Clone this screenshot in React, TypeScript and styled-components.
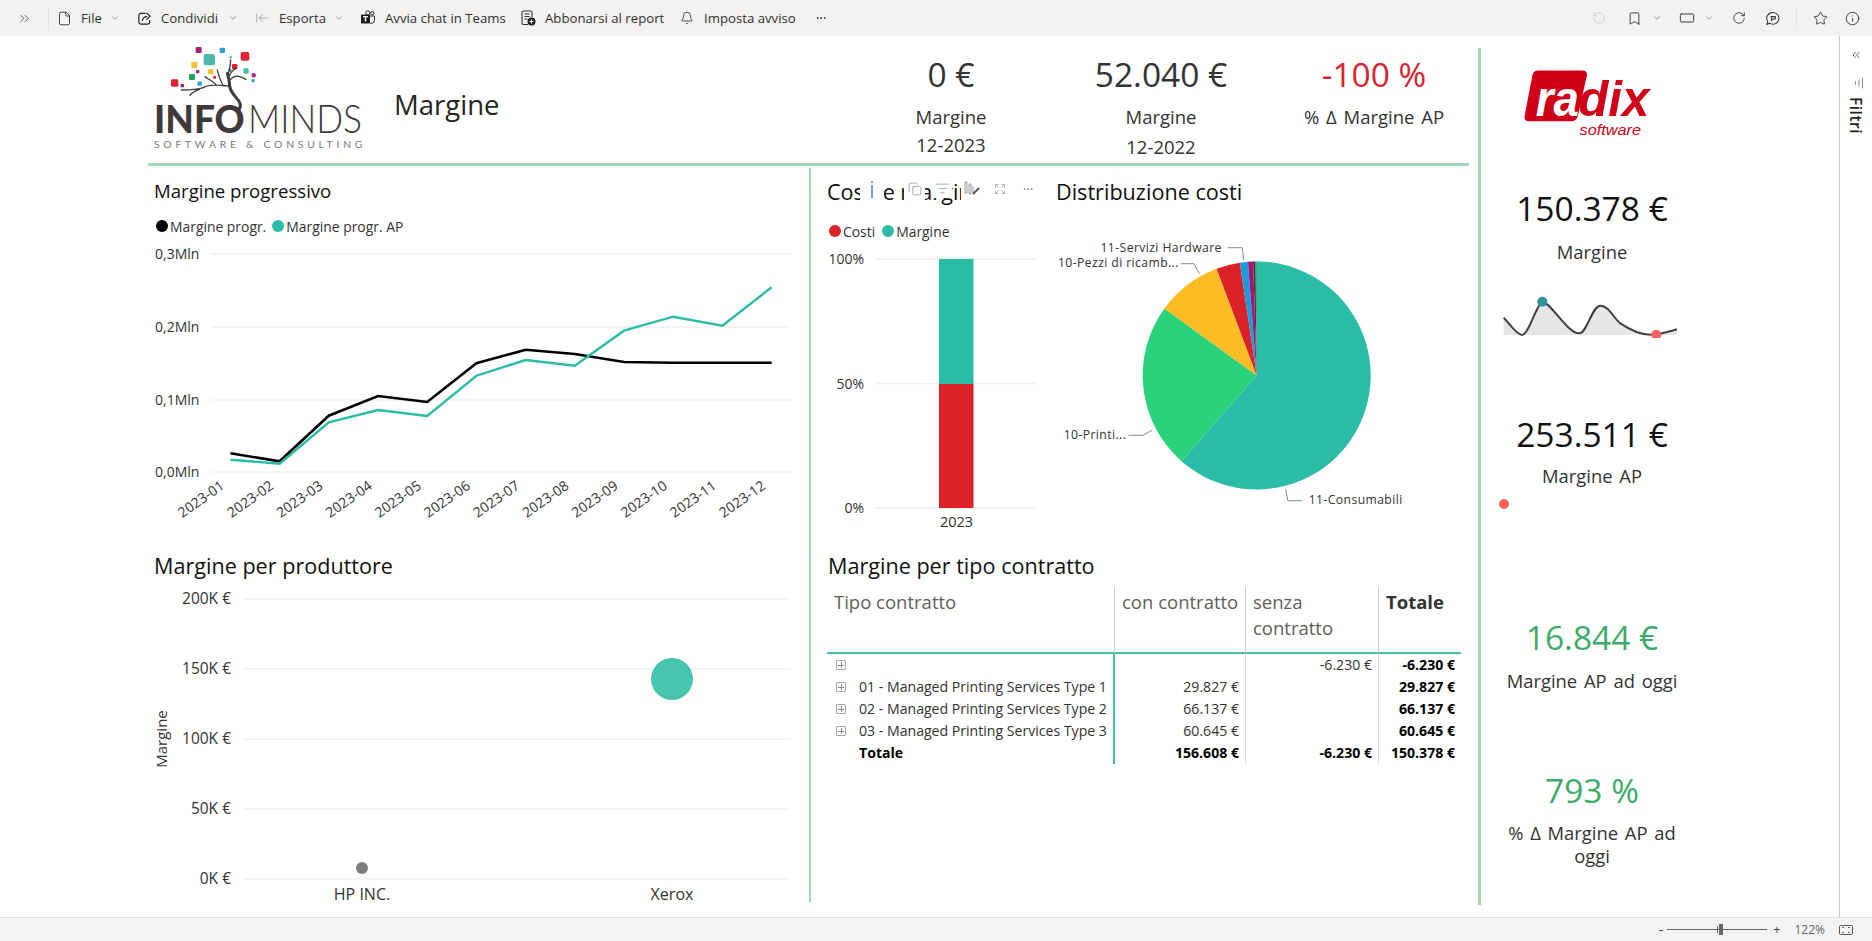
import styled, { createGlobalStyle } from 'styled-components'
import {
  ArrowLeftToLine,
  Bell,
  Bookmark,
  ChevronDown,
  ChevronsLeft,
  ChevronsRight,
  Copy,
  Expand,
  File,
  Info,
  ListFilter,
  MoreHorizontal,
  RectangleHorizontal,
  RotateCcw,
  RotateCw,
  Star,
} from 'lucide-react'

const TEAL = '#2abca6'
const RED = '#dc2229'
const GREEN_LINE = '#a4d9b8'
const FONT = `"Open Sans", "Noto Sans", sans-serif`

const GlobalStyle = createGlobalStyle`
  html, body {
    margin: 0;
    padding: 0;
    height: 100%;
    overflow: hidden;
    background: #fff;
    font-family: ${FONT};
    color: #252423;
  }
  * { box-sizing: border-box; }
`

const Page = styled.div`
  width: 1872px;
  height: 941px;
  display: flex;
  flex-direction: column;
`

const Toolbar = styled.div`
  height: 36px;
  flex-shrink: 0;
  display: flex;
  align-items: center;
  background: #f3f2f1;
  padding: 0 12px 0 16px;
`

const ToolIcon = styled.span<{ $ml?: number; $color?: string }>`
  width: 16px;
  height: 16px;
  flex-shrink: 0;
  display: flex;
  align-items: center;
  justify-content: center;
  margin-left: ${p => p.$ml ?? 0}px;
  color: ${p => p.$color ?? '#201f1e'};
`

const ToolLabel = styled.span<{ $w: number }>`
  width: ${p => p.$w}px;
  margin-left: 9px;
  font-size: 13.2px;
  line-height: 16px;
  white-space: nowrap;
  color: #323130;
`

const ToolChevron = styled.span<{ $ml?: number }>`
  width: 10px;
  flex-shrink: 0;
  display: flex;
  justify-content: center;
  margin-left: ${p => p.$ml ?? 9}px;
  color: #484644;
`

const ToolDivider = styled.span<{ $ml: number }>`
  width: 1px;
  height: 24px;
  flex-shrink: 0;
  margin-left: ${p => p.$ml}px;
  background: #e4e2e0;
`

const ToolSpacer = styled.span`
  flex: 1;
`

const Canvas = styled.div`
  flex: 1;
  min-height: 0;
  display: flex;
`

const Report = styled.div`
  width: 1839px;
  flex-shrink: 0;
  padding: 10px 0 0 148px;
  display: flex;
`

const MainColumn = styled.div`
  width: 1321px;
  flex-shrink: 0;
  display: flex;
  flex-direction: column;
`

const Header = styled.header`
  height: 120px;
  flex-shrink: 0;
  display: flex;
  border-bottom: 3px solid ${GREEN_LINE};
`

const ReportTitle = styled.h1`
  flex: 1;
  margin: 0;
  padding: 40px 0 0 14px;
  font-size: 27.5px;
  line-height: 38px;
  font-weight: 400;
  color: #252423;
`

const TopKpi = styled.div<{ $ml: number }>`
  width: 190px;
  flex-shrink: 0;
  margin-left: ${p => p.$ml}px;
  padding-top: 3px;
  text-align: center;
`

const TopValue = styled.div<{ $red?: boolean }>`
  font-size: 33.5px;
  line-height: 50px;
  color: ${p => (p.$red ? '#d9232e' : '#333')};
`

const TopLabel = styled.div<{ $mt: number }>`
  margin-top: ${p => p.$mt}px;
  font-size: 18.5px;
  line-height: 24px;
  word-spacing: 2px;
  color: #333;
`

const Body = styled.div`
  display: flex;
  margin-top: 2px;
`

const LeftPanel = styled.section`
  width: 663px;
  height: 734px;
  flex-shrink: 0;
  border-right: 2px solid ${GREEN_LINE};
`

const RightPanel = styled.section`
  flex: 1;
  min-width: 0;
`

const ChartTitle = styled.h2<{ $size?: number; $pl: number; $mt: number }>`
  margin: ${p => p.$mt}px 0 0 ${p => p.$pl}px;
  font-size: ${p => p.$size ?? 21.6}px;
  line-height: 24px;
  font-weight: 400;
  color: #111;
  white-space: nowrap;
`

const Legend = styled.div<{ $pl: number; $mt: number }>`
  margin: ${p => p.$mt}px 0 0 ${p => p.$pl}px;
  height: 20px;
  display: flex;
  align-items: center;
  font-size: 13.9px;
  color: #333;
`

const LegendDot = styled.span<{ $color: string; $ml?: number }>`
  width: 12px;
  height: 12px;
  border-radius: 50%;
  margin-left: ${p => p.$ml ?? 0}px;
  margin-right: 2px;
  background: ${p => p.$color};
`

const Chart = styled.svg<{ $mt?: number }>`
  display: block;
  margin-top: ${p => p.$mt ?? 0}px;
`

const GridLine = styled.line`
  stroke: #f0f0f0;
  stroke-width: 1.5;
`

const AxisText = styled.text<{ $size?: number }>`
  font-family: ${FONT};
  font-size: ${p => p.$size ?? 14}px;
  fill: #333;
`

const PieLabel = styled.text`
  font-family: ${FONT};
  font-size: 12.2px;
  letter-spacing: 0.4px;
  fill: #333;
`

const Leader = styled.polyline`
  fill: none;
  stroke: #8a8a8a;
  stroke-width: 1;
`

const TopRow = styled.div`
  display: flex;
  height: 362px;
`

const CostPanel = styled.div`
  width: 239px;
  flex-shrink: 0;
  position: relative;
`

const PiePanel = styled.div`
  flex: 1;
  min-width: 0;
`

const VisualHeader = styled.div`
  position: absolute;
  top: 10px;
  left: 49px;
  display: flex;
  align-items: flex-start;
`

const HeaderIcon = styled.span<{ $w: number; $ml?: number; $h?: number }>`
  width: ${p => p.$w}px;
  height: ${p => p.$h ?? 22}px;
  margin-left: ${p => p.$ml ?? 0}px;
  display: flex;
  align-items: center;
  justify-content: center;
  background: #fff;
  color: #8a8886;
`

const MatrixTable = styled.table`
  width: 634px;
  margin: 9px 0 0 16px;
  table-layout: fixed;
  border-collapse: separate;
  border-spacing: 0;
`

const HeadCell = styled.th<{ $bold?: boolean; $last?: boolean }>`
  height: 67px;
  padding: 2px 0 0 7px;
  vertical-align: top;
  text-align: left;
  font-size: 18.5px;
  line-height: 26px;
  white-space: nowrap;
  font-weight: ${p => (p.$bold ? 700 : 400)};
  color: ${p => (p.$bold ? '#333' : '#605e5c')};
  border-bottom: 2px solid #45bfa9;
  border-right: ${p => (p.$last ? 'none' : '1.5px solid #ccc')};
`

const RowCell = styled.td<{ $bold?: boolean; $first?: boolean; $last?: boolean }>`
  height: 22px;
  padding: 0 6px 0 0;
  text-align: ${p => (p.$first ? 'left' : 'right')};
  font-size: 14.1px;
  line-height: 22px;
  white-space: nowrap;
  font-weight: ${p => (p.$bold ? 700 : 400)};
  color: ${p => (p.$bold ? '#000' : '#333')};
  border-right: ${p =>
    p.$first ? '2px solid #45bfa9' : p.$last ? 'none' : '1.5px solid #ddd'};
`

const RowHead = styled.span`
  display: flex;
  align-items: center;
  padding-left: 9px;
`

const ExpandBox = styled.span<{ $hidden?: boolean }>`
  width: 10px;
  height: 10px;
  flex-shrink: 0;
  margin-right: 13px;
  position: relative;
  border: ${p => (p.$hidden ? 'none' : '1px solid #a8a8a8')};
  border-radius: 1px;

  &::before,
  &::after {
    content: ${p => (p.$hidden ? 'none' : '""')};
    position: absolute;
    background: #8a8a8a;
  }
  &::before {
    left: 1px;
    right: 1px;
    top: 3.5px;
    height: 1px;
  }
  &::after {
    top: 1px;
    bottom: 1px;
    left: 3.5px;
    width: 1px;
  }
`

const Side = styled.aside`
  margin: 2px 0 0 9px;
  height: 857px;
  width: 361px;
  flex-shrink: 0;
  border-left: 3px solid ${GREEN_LINE};
`

const SideStack = styled.div`
  width: 222px;
  display: flex;
  flex-direction: column;
  text-align: center;
`

const RadixLogo = styled.svg`
  display: block;
  margin: 20px 0 0 42px;
`

const SideValue = styled.div<{ $mt: number; $green?: boolean }>`
  margin-top: ${p => p.$mt}px;
  font-size: 33.5px;
  line-height: 48px;
  color: ${p => (p.$green ? '#3eab6a' : '#111')};
`

const SideLabel = styled.div<{ $mt?: number }>`
  margin-top: ${p => p.$mt ?? 8}px;
  font-size: 18.4px;
  line-height: 23px;
  word-spacing: 2px;
  color: #333;
`

const Spark = styled.svg`
  display: block;
  margin: 32px 0 0 21px;
`

const MissingPoint = styled.span`
  width: 10px;
  height: 10px;
  margin: 12px 0 0 18px;
  border-radius: 50%;
  background: #fd625e;
`

const FilterPane = styled.div`
  flex: 1;
  border-left: 1px solid #c8c8c8;
  display: flex;
  flex-direction: column;
  align-items: center;
  padding-top: 13px;
  color: #323130;
`

const FilterGlyph = styled.span`
  margin: 16px 0 0 5px;
  height: 12px;
  display: flex;
  transform: rotate(90deg);
`

const FilterLabel = styled.span`
  margin-top: 8px;
  writing-mode: vertical-rl;
  font-size: 15.5px;
  line-height: 16px;
  letter-spacing: 0.5px;
  font-weight: 600;
  color: #252423;
`

const StatusBar = styled.footer`
  height: 24px;
  flex-shrink: 0;
  display: flex;
  align-items: center;
  justify-content: flex-end;
  padding-right: 19px;
  background: #f3f3f3;
  border-top: 1px solid #e1e1e1;
  color: #605e5c;
  font-size: 12px;
`

const ZoomSign = styled.span<{ $mr?: number; $size?: number }>`
  margin-right: ${p => p.$mr ?? 0}px;
  font-size: ${p => p.$size ?? 12.5}px;
  color: #444;
  line-height: 16px;
`

const ZoomTrack = styled.span`
  width: 100px;
  height: 1px;
  margin-right: 6px;
  position: relative;
  background: #666;
`

const ZoomThumb = styled.span`
  position: absolute;
  left: 52px;
  top: -5px;
  width: 4px;
  height: 11px;
  background: #666;
`

const ZoomTick = styled.span`
  position: absolute;
  left: 50px;
  top: -3px;
  width: 1px;
  height: 7px;
  background: #666;
`

const ZoomValue = styled.span`
  margin: 0 14px 0 14px;
  color: #666;
`

const FitIcon = styled.svg`
  display: block;
`

const MONTHS = Array.from({ length: 12 }, (_, i) => `2023-${String(i + 1).padStart(2, '0')}`)
const LINE_X = MONTHS.map((_, i) => 230.4 + i * 49.2)
const BLACK_Y = [453.3, 461.3, 415.7, 396, 402, 363.3, 349.7, 354, 362, 362.7, 362.7, 362.7]
const TEAL_Y = [459.7, 463.7, 422.3, 410, 416, 375.7, 360, 365.7, 330.7, 316.7, 325.7, 287.3]

const toPoints = (ys: number[]) => ys.map((y, i) => `${LINE_X[i]},${y}`).join(' ')

function LineChart() {
  const ticks: [string, number][] = [
    ['0,3Mln', 254],
    ['0,2Mln', 327],
    ['0,1Mln', 400],
    ['0,0Mln', 472],
  ]
  return (
    <Chart $mt={4} width={661} height={290} viewBox="148 240 661 290">
      {ticks.map(([label, y]) => (
        <g key={label}>
          <GridLine x1={211.4} x2={790} y1={y} y2={y} />
          <AxisText x={155} y={y + 5}>
            {label}
          </AxisText>
        </g>
      ))}
      <polyline points={toPoints(BLACK_Y)} fill="none" stroke="#000" strokeWidth={2.6} />
      <polyline points={toPoints(TEAL_Y)} fill="none" stroke={TEAL} strokeWidth={2.4} />
      {MONTHS.map((m, i) => (
        <AxisText
          key={m}
          textAnchor="end"
          transform={`translate(${LINE_X[i] - 5} 488) rotate(-35)`}>
          {m}
        </AxisText>
      ))}
    </Chart>
  )
}

function BubbleChart() {
  const ticks: [string, number][] = [
    ['200K €', 599],
    ['150K €', 669],
    ['100K €', 739],
    ['50K €', 809],
    ['0K €', 879],
  ]
  return (
    <Chart $mt={7} width={661} height={322} viewBox="148 585 661 322">
      {ticks.map(([label, y]) => (
        <g key={label}>
          <GridLine x1={243.5} x2={790} y1={y} y2={y} />
          <AxisText $size={15.5} x={231} y={y + 5} textAnchor="end">
            {label}
          </AxisText>
        </g>
      ))}
      <AxisText $size={15} textAnchor="middle" transform="translate(167 739) rotate(-90)">
        Margine
      </AxisText>
      <circle cx={362} cy={868} r={6} fill="#7f7f7f" />
      <circle cx={672} cy={679} r={21} fill="#47c4ae" />
      <AxisText $size={16} x={362} y={900} textAnchor="middle">
        HP INC.
      </AxisText>
      <AxisText $size={16} x={672} y={900} textAnchor="middle">
        Xerox
      </AxisText>
    </Chart>
  )
}

function StackedBar() {
  const ticks: [string, number][] = [
    ['100%', 259],
    ['50%', 383.5],
    ['0%', 508],
  ]
  return (
    <Chart $mt={4} width={239} height={285} viewBox="811 245 239 285">
      {ticks.map(([label, y]) => (
        <g key={label}>
          <GridLine x1={876} x2={1035.5} y1={y} y2={y} />
          <AxisText x={864} y={y + 5} textAnchor="end">
            {label}
          </AxisText>
        </g>
      ))}
      <rect x={939} y={259} width={34.5} height={125} fill={TEAL} />
      <rect x={939} y={384} width={34.5} height={124} fill={RED} />
      <AxisText $size={14.5} x={956.5} y={527} textAnchor="middle">
        2023
      </AxisText>
    </Chart>
  )
}

const PIE_CX = 1256.7
const PIE_CY = 375.5
const PIE_SLICES: [number, number, string][] = [
  [0, 221.3, TEAL],
  [221.3, 306, '#2ad27c'],
  [306, 339.4, '#fdbc24'],
  [339.4, 351.5, RED],
  [351.5, 355.6, '#1a9bdc'],
  [355.6, 358.2, '#a5127a'],
  [358.2, 359.4, '#3c3c3c'],
  [359.4, 360, '#118a4f'],
]

function slicePath(from: number, to: number) {
  const point = (deg: number) => {
    const rad = (deg * Math.PI) / 180
    return `${PIE_CX + 114 * Math.sin(rad)} ${PIE_CY - 114 * Math.cos(rad)}`
  }
  const large = to - from > 180 ? 1 : 0
  return `M${PIE_CX} ${PIE_CY}L${point(from)}A114 114 0 ${large} 1 ${point(to)}Z`
}

function PieChart() {
  return (
    <Chart $mt={6} width={419} height={320} viewBox="1050 210 419 320">
      {PIE_SLICES.map(([from, to, color]) => (
        <path key={from} d={slicePath(from, to)} fill={color} />
      ))}
      <PieLabel x={1100.5} y={251.5}>
        11-Servizi Hardware
      </PieLabel>
      <Leader points="1227.6,247.7 1242.3,247.7 1243.6,260" />
      <PieLabel x={1058} y={266.5}>
        10-Pezzi di ricamb...
      </PieLabel>
      <Leader points="1180.8,263.7 1193.8,263.7 1199.4,273.7" />
      <PieLabel x={1063.7} y={438.5}>
        10-Printi...
      </PieLabel>
      <Leader points="1128.7,435.3 1143,435.3 1152.6,430" />
      <PieLabel x={1308.7} y={503.5}>
        11-Consumabili
      </PieLabel>
      <Leader points="1285.7,489.3 1287.9,500.7 1302.2,500.7" />
    </Chart>
  )
}

const LOGO_TILES: [number, number, number, string][] = [
  [176, 42, 18, '#a5217c'],
  [247, 43, 16, '#2a9fdc'],
  [315, 61, 26, '#e01f35'],
  [208, 71, 34, '#4cb9a8'],
  [163, 87, 18, '#fbc231'],
  [272, 64, 6, '#1fa35a'],
  [284, 92, 16, '#e01f35'],
  [318, 105, 16, '#4cb9a8'],
  [173, 107, 10, '#a5217c'],
  [212, 107, 16, '#fbc231'],
  [270, 103, 8, '#1fa35a'],
  [341, 118, 12, '#a5217c'],
  [339, 134, 9, '#2a9fdc'],
  [224, 124, 8, '#e01f35'],
  [156, 123, 18, '#1fa35a'],
  [179, 143, 13, '#2a9fdc'],
  [104, 141, 22, '#e01f35'],
  [127, 149, 10, '#a5217c'],
]

function InfomindsLogo() {
  const ink = '#3f3a39'
  return (
    <svg width={232} height={110} viewBox="24 30 696 330">
      {LOGO_TILES.map(([x, y, s, color]) => (
        <rect
          key={`${x}-${y}`}
          x={x - s / 2}
          y={y - s / 2}
          width={s}
          height={s}
          rx={s / 5}
          fill={color}
        />
      ))}
      <g fill="none" stroke={ink} strokeLinecap="round">
        <path d="M296 222C316 195 272 182 269 150C268 130 266 125 262 112" strokeWidth={9} />
        <path
          d="M268 150C250 150 210 140 190 155C175 160 150 162 124 162M230 148C220 135 205 130 195 122M250 150C240 130 235 118 232 102M264 118C268 100 272 85 272 72M272 130C285 115 300 120 318 130M268 118C275 105 282 100 288 96M150 178C155 170 165 165 178 160"
          strokeWidth={4}
        />
      </g>
      <text
        x={42}
        y={290}
        fontFamily="Lato, sans-serif"
        fontWeight={900}
        fontSize={116}
        fill={ink}
        textLength={272}
        lengthAdjust="spacingAndGlyphs">
        INFO
      </text>
      <text
        x={324}
        y={290}
        fontFamily="Lato, sans-serif"
        fontWeight={300}
        fontSize={116}
        fill={ink}
        textLength={342}
        lengthAdjust="spacingAndGlyphs">
        MINDS
      </text>
      <text
        x={42}
        y={337}
        fontFamily="Lato, sans-serif"
        fontSize={31}
        fill="#77797b"
        textLength={625}>
        SOFTWARE &amp; CONSULTING
      </text>
    </svg>
  )
}

function Radix() {
  const red = '#cf0018'
  return (
    <RadixLogo width={128} height={70} viewBox="160 85 385 210">
      <path
        d="M205 92H338Q355 92 352 108L325 228Q321 245 304 245H178Q162 245 165 228L188 108Q191 92 205 92Z"
        fill={red}
      />
      <text
        x={198}
        y={230}
        fontFamily="Liberation Sans, sans-serif"
        fontStyle="italic"
        fontWeight={700}
        fontSize={150}
        fill="#fff"
        textLength={130}
        lengthAdjust="spacingAndGlyphs">
        ra
      </text>
      <text
        x={326}
        y={230}
        fontFamily="Liberation Sans, sans-serif"
        fontStyle="italic"
        fontWeight={700}
        fontSize={150}
        fill={red}
        textLength={214}
        lengthAdjust="spacingAndGlyphs">
        dix
      </text>
      <text
        x={330}
        y={285}
        fontFamily="Liberation Sans, sans-serif"
        fontStyle="italic"
        fontSize={46}
        fill={red}
        textLength={185}
        lengthAdjust="spacingAndGlyphs">
        software
      </text>
    </RadixLogo>
  )
}

function Sparkline() {
  const curve =
    'M100 833C120 855 140 885 155 885C175 885 195 800 216 785C240 785 290 880 327 880C350 880 365 797 390 797C415 797 430 835 450 850C480 870 510 884 540 884C570 884 595 875 620 868'
  return (
    <Spark width={177} height={43} viewBox="95 765 531 129">
      <path d={`${curve}L620 885L100 885Z`} fill="#e6e6e6" />
      <path d={curve} fill="none" stroke="#404040" strokeWidth={6} />
      <circle cx={216} cy={785} r={15} fill="#2e929b" />
      <circle cx={558} cy={884} r={15} fill="#fd625e" />
    </Spark>
  )
}

function ShareIcon() {
  return (
    <svg width={15} height={15} viewBox="0 0 16 16" fill="none" stroke="currentColor" strokeWidth={1.2}>
      <path d="M9 2.5H4A2 2 0 0 0 2 4.5V12A2 2 0 0 0 4 14H11.5A2 2 0 0 0 13.5 12V9.5" />
      <path d="M5.5 10.5C6 7.5 8.5 6 11 6M10 2L14 5.7L10 9.4" />
    </svg>
  )
}

function TeamsIcon() {
  return (
    <svg width={16} height={16} viewBox="0 0 16 16">
      <circle cx={12.2} cy={3.2} r={1.7} fill="none" stroke="#323130" strokeWidth={1} />
      <circle cx={7.8} cy={2.8} r={2} fill="none" stroke="#323130" strokeWidth={1} />
      <path d="M9.5 6H14.5V10.5A3 3 0 0 1 9 12" fill="none" stroke="#323130" strokeWidth={1} />
      <rect x={1} y={4.5} width={9} height={9} rx={1} fill="#1f1f1f" />
      <path d="M3 6.6H8M5.5 6.6V11.6" stroke="#fff" strokeWidth={1.4} />
    </svg>
  )
}

function SubscribeIcon() {
  return (
    <svg width={16} height={16} viewBox="0 0 16 16" fill="none" stroke="#323130" strokeWidth={1.1}>
      <path d="M8 14.5H3.5A1.5 1.5 0 0 1 2 13V2.5A1.5 1.5 0 0 1 3.5 1H10.5A1.5 1.5 0 0 1 12 2.5V7" />
      <path d="M4.5 4H9.5M4.5 6.5H9.5M4.5 9H7.5" />
      <circle cx={11.5} cy={11.5} r={4} fill="#1f1f1f" stroke="none" />
      <path d="M11.5 9.5V13.5M9.5 11.5H13.5" stroke="#fff" />
    </svg>
  )
}

function CommentIcon() {
  return (
    <svg width={15} height={15} viewBox="0 0 16 16" fill="none" stroke="#323130" strokeWidth={1.1}>
      <path d="M8.5 1.5A6.3 6.3 0 1 1 5 13L2 14.3L3 11.4A6.3 6.3 0 0 1 8.5 1.5Z" />
      <path d="M6 6H11V8.5H8.5L7 10V6" />
    </svg>
  )
}

function HoverHeader() {
  return (
    <VisualHeader>
      <HeaderIcon $w={24}>
        <svg width={4} height={17} viewBox="0 0 4 17">
          <rect x={1} y={0} width={2} height={2} fill="#7d9dbd" />
          <rect x={1} y={4} width={2} height={13} fill="#7d9dbd" />
        </svg>
      </HeaderIcon>
      <HeaderIcon $w={21} $ml={20}>
        <Copy size={14} strokeWidth={1.2} />
      </HeaderIcon>
      <HeaderIcon $w={19} $ml={8} $h={20}>
        <ListFilter size={15} strokeWidth={1.1} />
      </HeaderIcon>
      <HeaderIcon $w={76} $ml={9}>
        <svg width={18} height={16} viewBox="0 0 18 16" fill="none" stroke="#9a9a9a">
          <path d="M1 1H3V12H1ZM5 3H7V13H5ZM9 5V12" strokeWidth={1} />
          <path d="M9 13L15 7" stroke="#555" strokeWidth={2} />
        </svg>
        <Expand size={12} strokeWidth={1.2} style={{ marginLeft: 12 }} />
        <MoreHorizontal size={12} style={{ marginLeft: 16 }} />
      </HeaderIcon>
    </VisualHeader>
  )
}

const ROWS: [string, string, string, string][] = [
  ['', '', '-6.230 €', '-6.230 €'],
  ['01 - Managed Printing Services Type 1', '29.827 €', '', '29.827 €'],
  ['02 - Managed Printing Services Type 2', '66.137 €', '', '66.137 €'],
  ['03 - Managed Printing Services Type 3', '60.645 €', '', '60.645 €'],
]

function ContractMatrix() {
  return (
    <MatrixTable>
      <colgroup>
        <col width={288} />
        <col width={131} />
        <col width={133} />
        <col width={82} />
      </colgroup>
      <thead>
        <tr>
          <HeadCell>Tipo contratto</HeadCell>
          <HeadCell>con contratto</HeadCell>
          <HeadCell>
            senza
            <br />
            contratto
          </HeadCell>
          <HeadCell $bold $last>
            Totale
          </HeadCell>
        </tr>
      </thead>
      <tbody>
        {ROWS.map(([name, withC, withoutC, total]) => (
          <tr key={name + total}>
            <RowCell $first>
              <RowHead>
                <ExpandBox />
                {name}
              </RowHead>
            </RowCell>
            <RowCell>{withC}</RowCell>
            <RowCell>{withoutC}</RowCell>
            <RowCell $bold $last>
              {total}
            </RowCell>
          </tr>
        ))}
        <tr>
          <RowCell $first $bold>
            <RowHead>
              <ExpandBox $hidden />
              Totale
            </RowHead>
          </RowCell>
          <RowCell $bold>156.608 €</RowCell>
          <RowCell $bold>-6.230 €</RowCell>
          <RowCell $bold $last>
            150.378 €
          </RowCell>
        </tr>
      </tbody>
    </MatrixTable>
  )
}

export default function App() {
  return (
    <Page>
      <GlobalStyle />
      <Toolbar>
        <ToolIcon $color="#323130">
          <ChevronsRight size={15} strokeWidth={1.2} />
        </ToolIcon>
        <ToolDivider $ml={16} />
        <ToolIcon $ml={7}>
          <File size={15} strokeWidth={1.3} />
        </ToolIcon>
        <ToolLabel $w={20}>File</ToolLabel>
        <ToolChevron>
          <ChevronDown size={10} strokeWidth={1.4} />
        </ToolChevron>
        <ToolIcon $ml={16}>
          <ShareIcon />
        </ToolIcon>
        <ToolLabel $w={58}>Condividi</ToolLabel>
        <ToolChevron>
          <ChevronDown size={10} strokeWidth={1.4} />
        </ToolChevron>
        <ToolIcon $ml={16} $color="#8a8886">
          <ArrowLeftToLine size={14} strokeWidth={1.1} />
        </ToolIcon>
        <ToolLabel $w={46}>Esporta</ToolLabel>
        <ToolChevron>
          <ChevronDown size={10} strokeWidth={1.4} />
        </ToolChevron>
        <ToolIcon $ml={16}>
          <TeamsIcon />
        </ToolIcon>
        <ToolLabel $w={119}>Avvia chat in Teams</ToolLabel>
        <ToolIcon $ml={16}>
          <SubscribeIcon />
        </ToolIcon>
        <ToolLabel $w={119}>Abbonarsi al report</ToolLabel>
        <ToolIcon $ml={15}>
          <Bell size={14} strokeWidth={1.3} />
        </ToolIcon>
        <ToolLabel $w={90}>Imposta avviso</ToolLabel>
        <ToolIcon $ml={19}>
          <MoreHorizontal size={12} strokeWidth={1.5} />
        </ToolIcon>
        <ToolSpacer />
        <ToolIcon $color="#c8c6c4">
          <RotateCcw size={14} strokeWidth={1.2} />
        </ToolIcon>
        <ToolIcon $ml={19}>
          <Bookmark size={15} strokeWidth={1.3} />
        </ToolIcon>
        <ToolChevron $ml={10}>
          <ChevronDown size={10} strokeWidth={1.4} />
        </ToolChevron>
        <ToolIcon $ml={17}>
          <RectangleHorizontal size={16} strokeWidth={1.3} />
        </ToolIcon>
        <ToolChevron>
          <ChevronDown size={10} strokeWidth={1.4} />
        </ToolChevron>
        <ToolIcon $ml={17}>
          <RotateCw size={14} strokeWidth={1.3} />
        </ToolIcon>
        <ToolIcon $ml={17}>
          <CommentIcon />
        </ToolIcon>
        <ToolDivider $ml={16} />
        <ToolIcon $ml={15}>
          <Star size={15} strokeWidth={1.3} />
        </ToolIcon>
        <ToolIcon $ml={16}>
          <Info size={15} strokeWidth={1.3} />
        </ToolIcon>
      </Toolbar>
      <Canvas>
        <Report>
          <MainColumn>
            <Header>
              <InfomindsLogo />
              <ReportTitle>Margine</ReportTitle>
              <TopKpi $ml={0}>
                <TopValue>0 €</TopValue>
                <TopLabel $mt={6}>Margine</TopLabel>
                <TopLabel $mt={4}>12-2023</TopLabel>
              </TopKpi>
              <TopKpi $ml={20}>
                <TopValue>52.040 €</TopValue>
                <TopLabel $mt={6}>Margine</TopLabel>
                <TopLabel $mt={6}>12-2022</TopLabel>
              </TopKpi>
              <TopKpi $ml={23}>
                <TopValue $red>-100 %</TopValue>
                <TopLabel $mt={6}>% Δ Margine AP</TopLabel>
              </TopKpi>
            </Header>
            <Body>
              <LeftPanel>
                <ChartTitle $size={18.6} $pl={6} $mt={11}>
                  Margine progressivo
                </ChartTitle>
                <Legend $pl={8} $mt={13}>
                  <LegendDot $color="#000" />
                  Margine progr.
                  <LegendDot $color={TEAL} $ml={6} />
                  Margine progr. AP
                </Legend>
                <LineChart />
                <ChartTitle $pl={6} $mt={24}>
                  Margine per produttore
                </ChartTitle>
                <BubbleChart />
              </LeftPanel>
              <RightPanel>
                <TopRow>
                  <CostPanel>
                    <ChartTitle $pl={16} $mt={12}>
                      Costi e margine
                    </ChartTitle>
                    <HoverHeader />
                    <Legend $pl={18} $mt={17}>
                      <LegendDot $color={RED} />
                      Costi
                      <LegendDot $color={TEAL} $ml={7} />
                      Margine
                    </Legend>
                    <StackedBar />
                  </CostPanel>
                  <PiePanel>
                    <ChartTitle $pl={6} $mt={12}>
                      Distribuzione costi
                    </ChartTitle>
                    <PieChart />
                  </PiePanel>
                </TopRow>
                <ChartTitle $pl={17} $mt={24}>
                  Margine per tipo contratto
                </ChartTitle>
                <ContractMatrix />
              </RightPanel>
            </Body>
          </MainColumn>
          <Side>
            <SideStack>
              <Radix />
              <SideValue $mt={46}>150.378 €</SideValue>
              <SideLabel>Margine</SideLabel>
              <Sparkline />
              <SideValue $mt={72}>253.511 €</SideValue>
              <SideLabel $mt={6}>Margine AP</SideLabel>
              <MissingPoint />
              <SideValue $mt={104} $green>
                16.844 €
              </SideValue>
              <SideLabel>Margine AP ad oggi</SideLabel>
              <SideValue $mt={74} $green>
                793 %
              </SideValue>
              <SideLabel $mt={7}>
                % Δ Margine AP ad
                <br />
                oggi
              </SideLabel>
            </SideStack>
          </Side>
        </Report>
        <FilterPane>
          <ChevronsLeft size={12} strokeWidth={1.5} />
          <FilterGlyph>
            <ListFilter size={12} strokeWidth={1.1} />
          </FilterGlyph>
          <FilterLabel>Filtri</FilterLabel>
        </FilterPane>
      </Canvas>
      <StatusBar>
        <ZoomSign $mr={4} $size={14}>
          -
        </ZoomSign>
        <ZoomTrack>
          <ZoomTick />
          <ZoomThumb />
        </ZoomTrack>
        <ZoomSign>+</ZoomSign>
        <ZoomValue>122%</ZoomValue>
        <FitIcon width={14} height={10} viewBox="0 0 14 10" fill="none" stroke="#555">
          <rect x={0.5} y={0.5} width={13} height={9} rx={1} />
          <path d="M3.5 3V2.5H5M9 2.5H10.5V3M10.5 7V7.5H9M5 7.5H3.5V7" />
        </FitIcon>
      </StatusBar>
    </Page>
  )
}
